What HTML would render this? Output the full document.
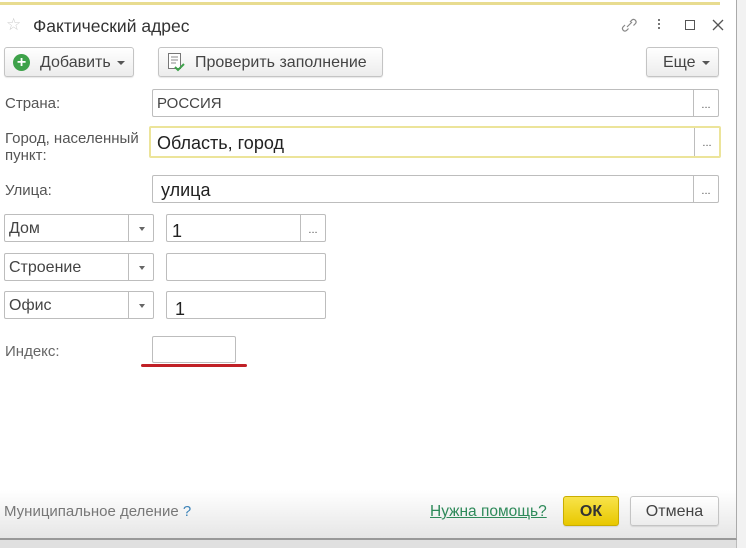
<!DOCTYPE html>
<html><head><meta charset="utf-8"><style>
*{box-sizing:border-box;margin:0;padding:0}
body{width:746px;height:548px;position:relative;overflow:hidden;background:#e0e0e0;font-family:"Liberation Sans",Arial,sans-serif;color:#444}
.a{position:absolute}
#side{left:736px;top:0;width:10px;height:548px;background:#f2f2f2;border-left:1px solid #bbb}
#dlg{left:0;top:0;width:737px;height:540px;background:#fff;border-right:1px solid #aaa;border-bottom:2px solid #999}
#topline{left:0;top:2px;width:720px;height:3px;background:#e8dc90}
.btn{position:absolute;height:30px;border:1px solid #c4c4c4;border-radius:3px;background:linear-gradient(#fff,#ececec);font-size:16px;color:#444;line-height:30px;box-shadow:0 1px 1px rgba(0,0,0,.1)}
.lbl{position:absolute;font-size:15px;color:#555}
.fld{position:absolute;height:28px;border:1px solid #bdbdbd;border-radius:2px;background:#fff;font-size:16px;color:#333;line-height:28px;padding-left:4px}
.dots{position:absolute;right:0;top:0;width:25px;height:100%;border-left:1px solid #bdbdbd;font-size:11px;text-align:center;line-height:30px;color:#555}
.dd{position:absolute;right:0;top:0;width:25px;height:100%;border-left:1px solid #bdbdbd}
.dd:after{content:"";position:absolute;left:10px;top:12px;border:3px solid transparent;border-top:4px solid #666}
.caret{display:inline-block;border:4px solid transparent;border-top:4px solid #555;vertical-align:middle;margin-left:6px;margin-top:4px}
#foot{left:0;top:490px;width:736px;height:48px;background:linear-gradient(#fff,#e6e6e6)}
</style></head><body>
<div class="a" id="side"></div>
<div class="a" id="dlg"></div>
<div class="a" id="topline"></div>
<div class="a" style="left:6px;top:15px;font-size:17px;color:#ccc">☆</div>
<div class="a" style="left:33px;top:16px;font-size:17.5px;color:#333">Фактический адрес</div>
<svg class="a" style="left:620px;top:17px" width="18" height="16" viewBox="0 0 18 16"><path d="M7 10l5-5M5 8l-2 2a2.5 2.5 0 0 0 3.5 3.5l2-2M10 5l2-2a2.5 2.5 0 0 1 3.5 3.5l-2 2" stroke="#888" fill="none" stroke-width="1.2"/></svg>
<div class="a" style="left:658px;top:19px;width:2px;height:2px;background:#777;box-shadow:0 4px #777,0 8px #777"></div>
<div class="a" style="left:685px;top:20px;width:10px;height:10px;border:1.5px solid #555"></div>
<svg class="a" style="left:712px;top:19px" width="12" height="12"><path d="M1 1l10 10M11 1L1 11" stroke="#555" stroke-width="1.3"/></svg>

<div class="btn" style="left:4px;top:47px;width:130px;padding-left:35px">Добавить<span class="caret"></span></div>
<div class="a" style="left:13px;top:54px;width:17px;height:17px;border-radius:50%;background:#3ea24a;color:#fff;font-size:16px;font-weight:bold;text-align:center;line-height:17px">+</div>
<div class="btn" style="left:158px;top:47px;width:225px;padding-left:36px">Проверить заполнение</div>
<svg class="a" style="left:167px;top:52px" width="18" height="20"><rect x="1.5" y="1.5" width="12" height="15" fill="#fff" stroke="#777"/><path d="M4 5h7M4 8h7M4 11h5" stroke="#888"/><path d="M8 15l3 3 6-6" stroke="#3ea24a" stroke-width="2" fill="none"/></svg>
<div class="btn" style="left:646px;top:47px;width:73px;padding-left:16px">Еще<span class="caret"></span></div>

<div class="lbl" style="left:5px;top:95px">Страна:</div>
<div class="fld" style="left:152px;top:89px;width:567px;font-size:15px;color:#444">РОССИЯ<div class="dots">...</div></div>

<div class="lbl" style="left:5px;top:130px;line-height:17px">Город, населенный<br>пункт:</div>
<div class="fld" style="left:149px;top:126px;width:572px;height:32px;border:2px solid #ece49a;font-size:18px;color:#222;line-height:30px;padding-left:6px">Область, город<div class="dots" style="line-height:30px">...</div></div>

<div class="lbl" style="left:5px;top:182px">Улица:</div>
<div class="fld" style="left:152px;top:175px;width:567px;font-size:18px;color:#222;padding-left:8px;line-height:28px">улица<div class="dots">...</div></div>

<div class="fld" style="left:4px;top:214px;width:150px;color:#444;line-height:28px">Дом<div class="dd"></div></div>
<div class="fld" style="left:166px;top:214px;width:160px;font-size:18px;color:#222;padding-left:5px;line-height:32px">1<div class="dots">...</div></div>
<div class="fld" style="left:4px;top:253px;width:150px;color:#444">Строение<div class="dd"></div></div>
<div class="fld" style="left:166px;top:253px;width:160px"></div>
<div class="fld" style="left:4px;top:291px;width:150px;color:#444">Офис<div class="dd"></div></div>
<div class="fld" style="left:166px;top:291px;width:160px;font-size:18px;color:#222;padding-left:8px;line-height:34px">1</div>

<div class="lbl" style="left:5px;top:343px;color:#666">Индекс:</div>
<div class="fld" style="left:152px;top:336px;width:84px;height:27px"></div>
<div class="a" style="left:141px;top:364px;width:106px;height:3px;background:#c02026;border-radius:2px"></div>

<div class="a" id="foot"></div>
<div class="a" style="left:4px;top:503px;font-size:15px;color:#777">Муниципальное деление <span style="color:#3c83b8">?</span></div>
<div class="a" style="left:430px;top:503px;font-size:15.5px;color:#2e8a5a;text-decoration:underline">Нужна помощь?</div>
<div class="btn" style="left:563px;top:496px;width:56px;background:linear-gradient(#f8e34a,#e8c800);border-color:#c9ad00;font-weight:bold;color:#333;text-align:center">ОК</div>
<div class="btn" style="left:630px;top:496px;width:89px;text-align:center">Отмена</div>
</body></html>
